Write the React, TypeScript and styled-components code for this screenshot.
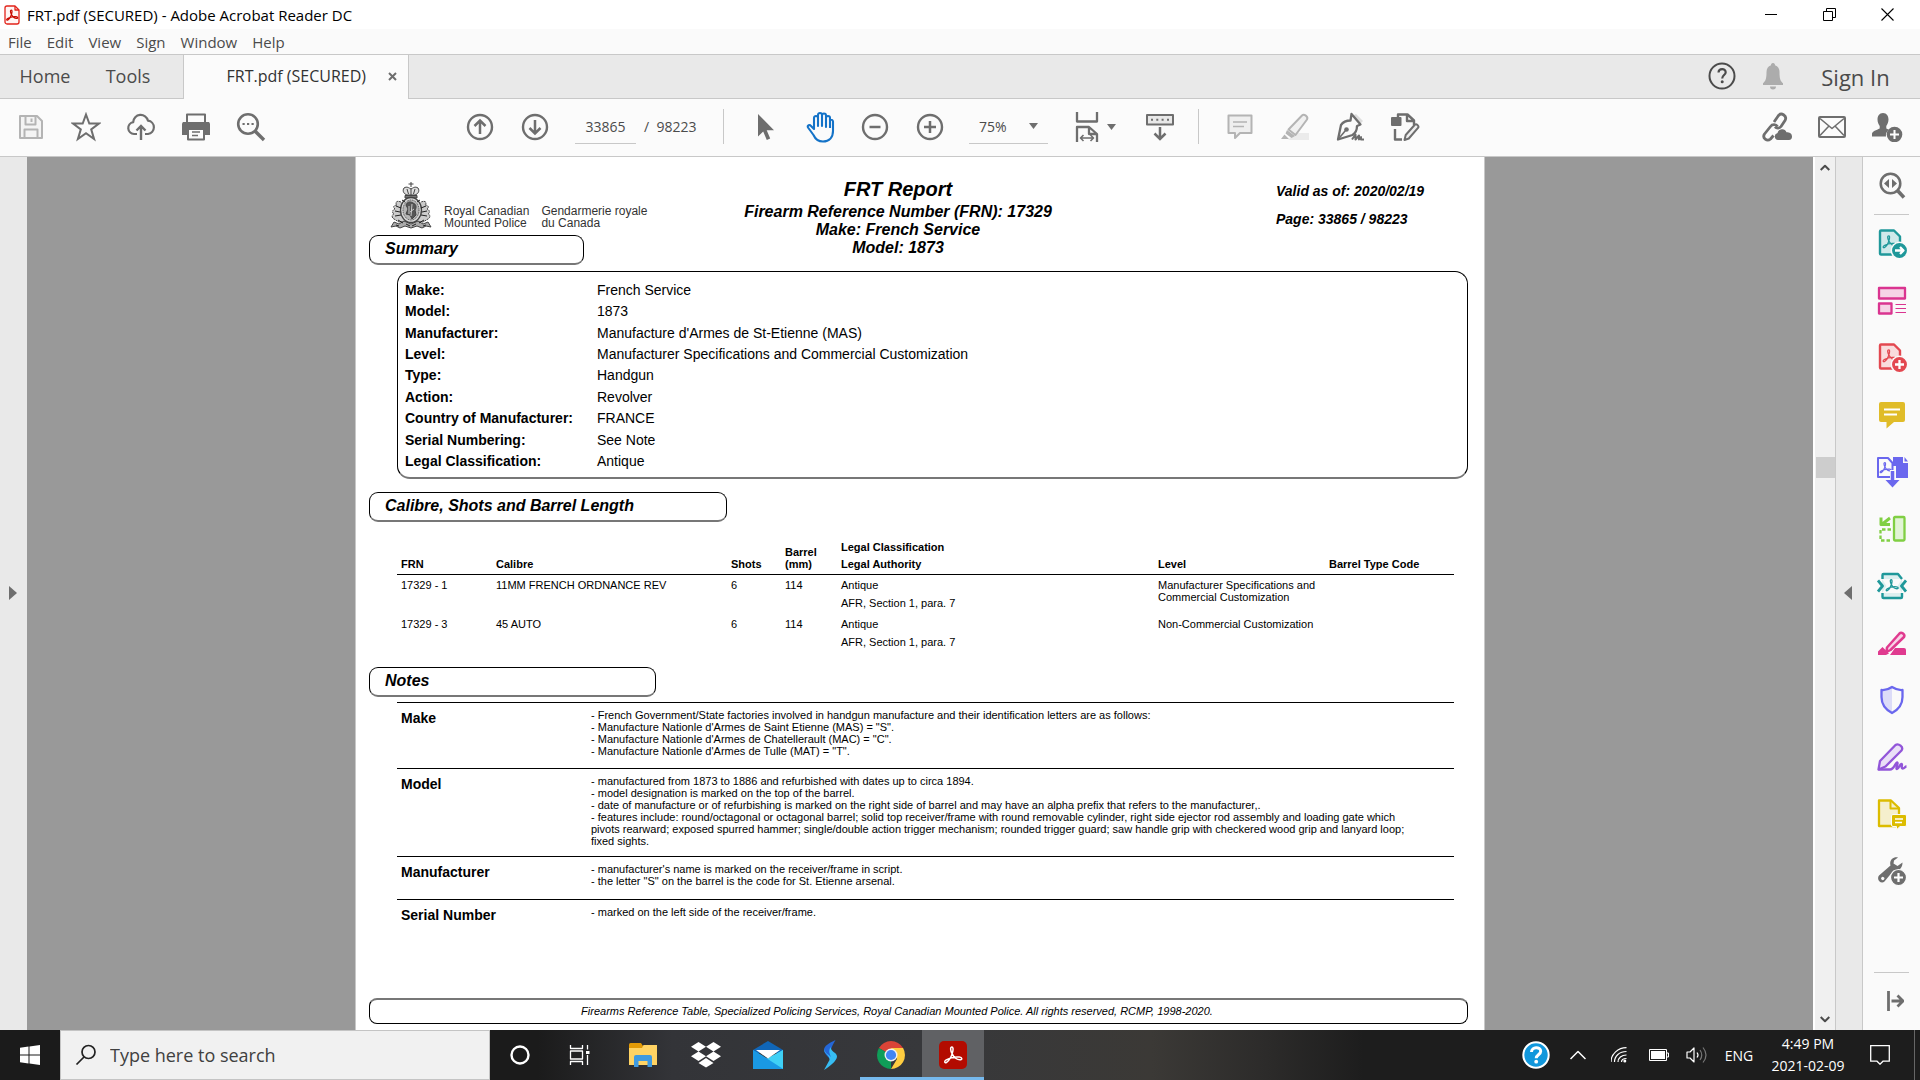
import React from "react";
import styled, { createGlobalStyle } from "styled-components";

const UI_FONT = `"Open Sans", "Noto Sans", sans-serif`;
const DOC_FONT = `"Liberation Sans", Arial, sans-serif`;

const GlobalStyle = createGlobalStyle`
  * { box-sizing: border-box; }
  body { margin: 0; font-family: ${UI_FONT}; color: #4b4b4b; overflow: hidden; }
  button, input, select { font: inherit; color: inherit; background: none; border: 0; padding: 0; margin: 0; }
  svg { display: block; flex: none; }
  h1, h2, p, dl, dd, dt { margin: 0; }
`;

/* ---------- window frame ---------- */

const Window = styled.div`
  display: flex;
  flex-direction: column;
  height: 100vh;
  background: #fafafa;
`;

const TitleBar = styled.header`
  display: flex;
  align-items: center;
  height: 29px;
  padding: 0 4px;
  background: #fff;
  color: #000;
  font-size: 15px;
`;

const WindowTitle = styled.span`
  margin-left: 7px;
  flex: 1;
`;

const WindowButton = styled.button`
  width: 58px;
  height: 28px;
  display: grid;
  place-items: center;
`;

const MenuBar = styled.nav`
  display: flex;
  align-items: center;
  gap: 15px;
  height: 25px;
  padding-left: 8px;
  font-size: 15px;
`;

const TabBar = styled.div`
  display: flex;
  align-items: stretch;
  height: 45px;
  background: #e9e9e9;
  border-top: 1px solid #c8c8c8;
  border-bottom: 1px solid #c8c8c8;
  font-size: 18px;
`;

const TextTab = styled.button<{ $width: number }>`
  width: ${(p) => p.$width}px;
  padding-bottom: 2px;
  text-align: center;
`;

const ActiveTab = styled.div`
  display: flex;
  align-items: center;
  justify-content: flex-end;
  gap: 22px;
  width: 226px;
  margin: 0 auto -1px 17px;
  padding: 0 11px 2px 0;
  background: #fbfbfb;
  border: solid #c8c8c8;
  border-width: 0 1px;
  color: #323232;
  font-size: 16px;
`;

const CloseTab = styled.button`
  color: #6e6e6e;
`;

const TabBarButton = styled.button`
  width: 51px;
  padding-bottom: 2px;
  display: grid;
  place-items: center;
`;

const SignIn = styled.button`
  width: 122px;
  padding-right: 7px;
  font-size: 22px;
`;

/* ---------- toolbar ---------- */

const Toolbar = styled.div`
  display: flex;
  align-items: center;
  height: 58px;
  padding: 0 6px 2px 3px;
  background: #fbfbfb;
  border-bottom: 1px solid #c8c8c8;
  color: #6e6e6e;
  font-size: 14px;
`;

const ToolGroup = styled.div<{ $before?: string }>`
  display: flex;
  align-items: center;
  margin-left: ${(p) => p.$before ?? "0"};
`;

const ToolButton = styled.button<{ $faded?: boolean; $active?: boolean }>`
  width: 55px;
  height: 44px;
  display: grid;
  place-items: center;
  color: ${(p) => (p.$active ? "#1473c8" : p.$faded ? "#b4b4b4" : "#6e6e6e")};
`;

const DropButton = styled(ToolButton)`
  width: 84px;
  padding-left: 10px;
  grid-auto-flow: column;
  justify-content: center;
  gap: 8px;
`;

const PageField = styled.input`
  width: 61px;
  height: 34px;
  margin: 0 8px 0 13px;
  text-align: center;
  color: #4b4b4b;
  border-bottom: 1px solid #c8c8c8;
`;

const PageTotal = styled.span`
  width: 79px;
  color: #4b4b4b;
  white-space: pre;
`;

const Separator = styled.span`
  width: 1px;
  height: 35px;
  margin-right: 13px;
  background: #c8c8c8;
`;

const ZoomBox = styled.label`
  display: flex;
  align-items: center;
  width: 79px;
  height: 34px;
  margin-left: 12px;
  padding: 0 10px;
  border-bottom: 1px solid #c8c8c8;
`;

const ZoomSelect = styled.select`
  appearance: none;
  flex: 1;
  min-width: 0;
  color: #4b4b4b;
`;

/* ---------- viewer ---------- */

const Viewer = styled.main`
  display: flex;
  flex: 1;
  min-height: 0;
`;

const SideHandle = styled.button<{ $side: "left" | "right" }>`
  width: ${(p) => (p.$side === "left" ? 27 : 26)}px;
  display: flex;
  align-items: center;
  padding: 0 0 2px ${(p) => (p.$side === "left" ? 9 : 8)}px;
  background: #e9e9e9;
`;

const Canvas = styled.div`
  flex: 1;
  display: flex;
  justify-content: center;
  min-width: 0;
  background: #999;
`;

const ScrollBar = styled.div`
  display: flex;
  flex-direction: column;
  align-items: center;
  width: 23px;
  background: #f0f0f0;
  border-left: 2px solid #fff;
  border-right: 1px solid #c8c8c8;
`;

const ScrollButton = styled.button`
  width: 20px;
  height: 21px;
  display: grid;
  place-items: center;
`;

const ScrollSpace = styled.span<{ $grow: number }>`
  flex: ${(p) => p.$grow};
`;

const ScrollThumb = styled.span`
  width: 19px;
  height: 21px;
  background: #cdcdcd;
`;

const ToolPanel = styled.aside`
  display: flex;
  flex-direction: column;
  align-items: center;
  width: 58px;
  background: #fafafa;
  border-left: 1px solid #c8c8c8;
`;

const PanelButton = styled.button`
  width: 57px;
  height: 57px;
  display: grid;
  place-items: center;
  color: #6e6e6e;
`;

const PanelRule = styled.span<{ $bottom?: boolean }>`
  width: 35px;
  height: 1px;
  background: #c8c8c8;
  margin-top: ${(p) => (p.$bottom ? "auto" : "0")};
`;

/* ---------- document ---------- */

const Sheet = styled.article`
  display: flex;
  flex-direction: column;
  flex: 0 1 1130px;
  padding: 0 16px 6px 13px;
  background: #fff;
  border: solid #c8c8c8;
  border-width: 0 1px;
  color: #000;
  font-family: ${DOC_FONT};
  font-size: 14px;
`;

const ReportHead = styled.div`
  display: grid;
  grid-template-columns: 339px 380px 1fr;
  padding-top: 20px;
  font-weight: bold;
  font-style: italic;
`;

const Brand = styled.div`
  display: flex;
  align-items: flex-end;
  gap: 12px;
  height: 52px;
  margin-bottom: 6px;
  padding-left: 21px;
  font-size: 12px;
  font-weight: normal;
  font-style: normal;
  line-height: 12px;
  color: #333;
`;

const Titles = styled.div`
  text-align: center;
  font-size: 16px;
  line-height: 18px;
`;

const ReportTitle = styled.h1`
  font-size: 20px;
  line-height: 24px;
  margin-bottom: 2px;
`;

const Validity = styled.div`
  padding-left: 188px;
  line-height: 28px;
  font-size: 14px;
`;

const SectionTitle = styled.h2<{ $width: number }>`
  width: ${(p) => p.$width}px;
  height: 30px;
  padding-left: 15px;
  border: 1px solid #000;
  border-bottom: 2px solid #777;
  border-radius: 9px;
  font-size: 16px;
  line-height: 26px;
  font-weight: bold;
  font-style: italic;
`;

const SummaryBox = styled.dl`
  display: grid;
  grid-template-columns: 192px 1fr;
  grid-template-rows: repeat(9, 1fr);
  align-items: center;
  height: 208px;
  margin: 6px 0 13px 28px;
  padding: 7px 7px 5px;
  border: 1px solid #000;
  border-bottom: 2px solid #777;
  border-radius: 13px;
`;

const Term = styled.dt`
  font-weight: bold;
`;

const Calibres = styled.table`
  table-layout: fixed;
  width: calc(100% - 42px);
  margin: 19px 0 14px 28px;
  border-collapse: separate;
  border-spacing: 0;
  font-size: 11px;
  line-height: 12px;
`;

const HeadCell = styled.th`
  padding: 0 0 4px 4px;
  text-align: left;
  vertical-align: bottom;
  border-bottom: 1px solid #000;
`;

const Cell = styled.td`
  padding: 4px 0 5px 4px;
  vertical-align: top;
`;

const Stacked = styled.div<{ $gap: number }>`
  display: grid;
  gap: ${(p) => p.$gap}px;
`;

const Notes = styled.dl`
  display: grid;
  grid-template-rows: 66px 88px 43px auto;
  margin: 5px 14px 0 28px;
`;

const Note = styled.div`
  display: grid;
  grid-template-columns: 190px 1fr;
  padding: 6px 0 0 4px;
  border-top: 1px solid #000;
`;

const NoteTerm = styled(Term)`
  line-height: 18px;
`;

const NoteText = styled.dd`
  font-size: 11px;
  line-height: 12px;
`;

const Copyright = styled.footer`
  margin-top: auto;
  height: 26px;
  padding-right: 43px;
  border: 1px solid #000;
  border-top: 2px solid #777;
  border-radius: 8px;
  text-align: center;
  font-size: 11px;
  line-height: 23px;
  font-style: italic;
`;

/* ---------- taskbar ---------- */

const Taskbar = styled.footer`
  display: flex;
  align-items: stretch;
  height: 50px;
  color: #fff;
  background: linear-gradient(90deg, #1b1b1b 0, #1b1b1b 28%, #333438 35%, #37383b 48%, #3b3936 60%, #2c2b2a 66%, #1d1d1d 71%);
`;

const TaskButton = styled.button<{ $width?: number; $running?: boolean; $current?: boolean }>`
  width: ${(p) => p.$width ?? 62}px;
  display: grid;
  place-items: center;
  padding-bottom: 1px;
  background: ${(p) => (p.$current ? "#606164" : "none")};
  ${(p) => p.$running && `box-shadow: inset 0 -3px #76b9ed;`}
`;

const SearchBox = styled.label`
  display: flex;
  align-items: center;
  gap: 13px;
  width: 430px;
  padding-left: 14px;
  background: #f1f1f1;
  border: 1px solid #c4c4c4;
  color: #222;
  font-size: 18px;
`;

const SearchInput = styled.input`
  flex: 1;
  min-width: 0;
  outline: 0;
  &::placeholder { color: #404040; opacity: 1; }
`;

const Tray = styled.div`
  display: flex;
  align-items: center;
  margin-left: auto;
  font-size: 14px;
`;

const TrayButton = styled.button<{ $width: number }>`
  width: ${(p) => p.$width}px;
  height: 50px;
  display: grid;
  place-items: center;
`;

const Clock = styled.button`
  width: 92px;
  height: 50px;
  line-height: 22px;
  text-align: center;
`;

const DesktopEdge = styled.span`
  width: 1px;
  height: 50px;
  margin-right: 5px;
  background: #666;
`;

/* ---------- icons ---------- */

type IconProps = { w?: number; h?: number; box?: string; sw?: number; children: React.ReactNode };
const Icon = ({ w = 30, h = 30, box, sw = 2, children }: IconProps) => (
  <svg width={w} height={h} viewBox={box ?? `0 0 ${w} ${h}`} fill="none" stroke="currentColor" strokeWidth={sw} strokeLinejoin="round" aria-hidden="true">
    {children}
  </svg>
);

const solid = { fill: "currentColor", stroke: "none" };

/* the three-armed Acrobat ribbon, drawn in a square of the given size */
const Ribbon = ({ x, y, size, color, sw }: { x: number; y: number; size: number; color: string; sw: number }) => (
  <path
    d="M13 6.500c-1.800 0-1.500 3 .2 6.300 1.600 3 4.500 5.700 7.300 5.700 2.500 0 2.400-2.300-.6-2.600-4-.4-9 .7-12.300 2.600-2.400 1.500-1.400 3.500.4 2.300 2.300-1.600 4.900-6.300 5.800-10.300.5-2.300.3-4-.8-4Z"
    transform={`translate(${x} ${y}) scale(${size / 16}) translate(-6 -5.500)`}
    stroke={color}
    strokeWidth={(sw * 16) / size}
    fill="none"
  />
);

const AppIcon = () => (
  <Icon w={16} h={20} sw={1.300}>
    <path d="M1 3a2 2 0 0 1 2-2h8l4 4v12a2 2 0 0 1-2 2H3a2 2 0 0 1-2-2Z" stroke="#e2231a" fill="#fff5f4" />
    <path d="M11 1v4h4" stroke="#e2231a" />
    <Ribbon x={2.500} y={4.500} size={11} color="#c80a00" sw={1.200} />
  </Icon>
);
const Save = () => (
  <Icon w={26} h={26}>
    <path d="M2 2h17l5 5v17H2Z" fill="#f4f4f4" />
    <path d="M7.500 2v8.500h10V2M13.500 4.500v3.500M6.500 24v-8.500h13V24" />
  </Icon>
);
const Star = () => (
  <Icon><path d="m15 2.500 3.300 9h9.600l-7.700 5.900 2.900 9.700-8.100-5.800-8.100 5.800 2.900-9.700L2.100 11.500h9.600Z" strokeLinejoin="miter" /></Icon>
);
const Cloud = () => (
  <Icon>
    <path d="M11 22H8a6 6 0 0 1-.8-11.900A7.500 7.500 0 0 1 22 8.700 6.700 6.700 0 0 1 22 22h-3" strokeWidth="2.200" />
    <path d="M15 28V14M10.500 18.500 15 14l4.500 4.500" strokeWidth="2.400" strokeLinejoin="miter" />
  </Icon>
);
const Printer = () => (
  <Icon w={28} h={28} box="1 1 28 28">
    <path {...solid} d="M1 12a2 2 0 0 1 2-2h24a2 2 0 0 1 2 2v11h-5v-5H6v5H1Z" />
    <path d="M6 10V2.500h18V10M7 17h16v10.500H7Z" fill="#fbfbfb" />
    <path {...solid} d="M2 10h26v6H2Z" />
    <path d="M11 20h8M11 23.500h6" strokeWidth="1.500" />
  </Icon>
);
const Find = () => (
  <Icon sw={2.600}>
    <circle cx="12" cy="12" r="9.800" />
    <path d="m19 19 9 9" strokeWidth="3.400" />
    <path d="M6.500 12h2.200M11 12h2.200M15.500 12h2.200" strokeWidth="2.200" />
  </Icon>
);
const Circle = ({ d }: { d: string }) => (
  <Icon w={28} h={28} sw={2.400}><circle cx="14" cy="14" r="12" /><path d={d} strokeWidth="2.500" strokeLinejoin="miter" /></Icon>
);
const Pointer = () => <Icon w={18} h={28}><path {...solid} d="M2 1v22.500l5.200-5 3.600 8.500 3.400-1.500-3.500-8.300H18Z" /></Icon>;
const Hand = () => (
  <Icon w={30} h={32} sw={2.100}>
    <path d="M9 18V7a2 2 0 0 1 4 0v8V4a2 2 0 0 1 4 0v11V4.500a2 2 0 0 1 4 0V16 7a2 2 0 0 1 4 0v2a2 2 0 0 1 3 1.500V20c0 6-3.500 10.500-10 10.500-5 0-7.500-2-9.500-6.500L3 16.500c-1-2.200 1.700-3.300 3-1.500Z" />
    <path d="M25 8v9" />
  </Icon>
);
const Caret = () => <Icon w={9} h={6}><path {...solid} d="M0 0h9L4.500 6Z" /></Icon>;
const FitPage = () => (
  <Icon w={24} h={32} sw={2.300}>
    <path d="M2 1v9.500h20V1" />
    <path d="M2 31V16h12l8 7v8M14 16v7h8" />
    <path d="M5.500 27h13M8.500 24l-3 3 3 3M15.500 24l3 3-3 3" strokeWidth="1.600" />
  </Icon>
);
const Keyboard = () => (
  <Icon w={30} h={30}>
    <rect x="2" y="3" width="26" height="9.500" fill="#e8e8e8" />
    <path d="M6 7.700h2M11.300 7.700h2M16.600 7.700h2M22 7.700h2" />
    <path d="M15 15v12M9.500 21.500l5.500 5.500 5.500-5.500" strokeWidth="2.500" strokeLinejoin="miter" />
  </Icon>
);
const Comment = () => (
  <Icon w={28} h={28}>
    <path d="M2.500 2.500h23V20H14l-5 5v-5H2.500Z" fill="#efefef" />
    <path d="M7 9h14M7 13.500h11" strokeWidth="1.600" />
  </Icon>
);
const Marker = () => (
  <Icon>
    <path {...solid} fill="#ebebeb" d="M15 21h14v7H8Z" />
    <path d="M8.500 17.500 22 3.500c2-2 6.500 1 5 4L15.500 23Z" fill="#f1f1f1" />
    <path {...solid} d="m7 18 8 6-3.500 2-6-4.500ZM1 27l3.500-4.500L9 27Z" />
  </Icon>
);
const Pen = () => (
  <Icon>
    <path {...solid} fill="#dedede" d="m17 4 4-2 7 7-3 3Z" />
    <path d="m16.500 2 9 10.500-3.500 1.500c0 4-1.500 7-4.500 9L3 27.500l3-14.500c2-3 5.500-4.500 9.500-4.500Z" strokeWidth="2.300" />
    <path d="m3 27.500 7.500-9" strokeWidth="1.600" />
    <circle {...solid} cx="11.500" cy="17.500" r="2.300" />
    <path d="m17 27.500 3.500-5v5l3.500-4v4l2-2.500v2.500h3" />
  </Icon>
);
const EditDoc = () => (
  <Icon>
    <path d="M8 5V2.500h9.500l6.500 6V13M17 3v6h7M5 17v10.500h7" strokeWidth="2.400" />
    <rect {...solid} x="1" y="5" width="10.500" height="9" rx="1" />
    <path d="m14.500 28 1.200-5L25 12.500c1.500-1 4.500 1.500 3 3.300L18.800 26.500Z" fill="#eee" />
  </Icon>
);
const LinkCloud = () => (
  <Icon w={32}>
    <path d="m13 10 4.500-6.500c3-3.500 9 .5 6.500 5l-4 6c-1.500 2-4.500 2-6 .3M16.500 14.500c-1.500-2.300-5.200-2.500-7 0l-6 7.500c-2.500 4 2.500 8 6 5l3-3.500" strokeWidth="2.800" />
    <path {...solid} d="M17 28a3.500 3.500 0 0 1-.5-6.900 4.700 4.700 0 0 1 9-.9c3 0 5.500 1.300 5.500 4.200A3.500 3.500 0 0 1 28 28Z" />
  </Icon>
);
const Envelope = () => (
  <Icon w={30} h={24}>
    <rect x="2" y="2" width="26" height="20" rx="1" />
    <path d="m3 3.500 12 10 12-10M3 20.500l8.500-9M27 20.500l-8.500-9" strokeWidth="1.600" />
  </Icon>
);
const AddUser = () => (
  <Icon w={32}>
    <path {...solid} d="M12 1c3.800 0 5.500 3 5.500 6.500 0 3-1.200 5-2.200 6.500v2.500l2.700 1.300c-3 2.300-3.200 4-3 6.700H1v-2.700c0-2.500 4.500-3.700 7.700-5.300V14c-1-1.500-2.200-3.500-2.200-6.500C6.500 4 8.200 1 12 1Z" />
    <circle {...solid} cx="23.500" cy="22.500" r="7.800" />
    <path d="M23.500 18v9M19 22.500h9" stroke="#fff" />
  </Icon>
);
const Bell = () => (
  <Icon w={22} h={28}><path fill="#acacac" stroke="none" d="M11 1c1.500 0 2 1 2 2.200 3 1 4.500 3.500 4.500 7 0 7 1 8.800 3.500 11V23H1v-1.800c2.500-2.200 3.500-4 3.500-11 0-3.500 1.500-6 4.500-7C9 2 9.500 1 11 1ZM8 24.500h6a3 3 0 0 1-6 0Z" /></Icon>
);
const HelpIcon = () => (
  <Icon w={28} h={28} sw={2}>
    <circle cx="14" cy="14" r="12.500" />
    <path d="M10.500 10.500c.2-4.500 7.200-4.500 7.200-.3 0 2.800-3.500 3-3.500 6.300" strokeWidth="2.200" />
    <circle {...solid} cx="14.200" cy="19.800" r="1.500" />
  </Icon>
);

/* right-hand tool icons */
const PdfBadge = ({ color, tint, mark }: { color: string; tint: string; mark: string }) => (
  <Icon w={32} h={32}>
    <path d="M5 2.500h13l6 6V26.500H5a1 1 0 0 1-1-1v-22a1 1 0 0 1 1-1Z" stroke={color} fill={tint} strokeWidth="2.400" />
    <Ribbon x={7} y={7} size={13} color={color} sw={1.300} />
    <circle cx="23.500" cy="22.500" r="8.200" fill={color} stroke="#fafafa" strokeWidth="1.500" />
    <path d={mark} stroke="#fff" strokeWidth="2.300" />
  </Icon>
);
const SearchTool = () => (
  <Icon w={28} h={28} sw={2.500}>
    <circle cx="12.500" cy="11.500" r="9.800" /><path d="m19 18 7 7.500" strokeWidth="3.600" />
    <path {...solid} d="M6 11.500 11 7v9ZM19 11.500 14 7v9Z" />
  </Icon>
);
const Organize = () => (
  <Icon w={30} h={30}>
    <path d="M2 2h26v10.500H2ZM2 17.500h12.500v10H2Z" stroke="#da3490" fill="#f6d3e6" strokeWidth="2.300" />
    <path d="M18.500 18.500H29M18.500 22.500H29M18.500 26.500H29" stroke="#da3490" strokeWidth="1.200" />
  </Icon>
);
const CommentTool = () => (
  <Icon w={28} h={28}>
    <path d="M3 1h22a2 2 0 0 1 2 2v16a2 2 0 0 1-2 2h-9l-7.500 6.500V21H3a2 2 0 0 1-2-2V3a2 2 0 0 1 2-2Z" fill="#e0bc28" stroke="none" />
    <path d="M6 8.500h16M6 13.500h13" stroke="#fff" />
  </Icon>
);
const Combine = () => (
  <Icon w={32} h={32}>
    <path d="M17 1h10v6h5v15H20V10h-3Z" fill="#6a67ee" stroke="none" />
    <path d="M28.500 1v4.500H32Z" fill="#6a67ee" stroke="none" />
    <path d="M2 2h10l4.500 5v14H2Z" stroke="#6a67ee" fill="#fafafa" />
    <Ribbon x={4} y={6} size={11} color="#6a67ee" sw={1.200} />
    <path d="M16.500 14v13M10 24.500h13l-6.500 7Z" stroke="#fafafa" strokeWidth="5" />
    <path d="M16.500 15v10" stroke="#6a67ee" strokeWidth="3.500" />
    <path d="M9.500 24h14l-7 7.500Z" fill="#6a67ee" stroke="none" />
  </Icon>
);
const Compare = () => (
  <Icon w={30} h={30}>
    <rect x="17" y="3" width="10.500" height="23.500" rx="1" stroke="#80cf43" fill="#e2f4d6" strokeWidth="2.300" />
    <path d="M13 4 6 9.500M4 3.500v7h9" stroke="#80cf43" strokeWidth="3" />
    <path d="M14 15.500H3.500v11H14" stroke="#80cf43" strokeWidth="2.300" strokeDasharray="3.500 2" />
  </Icon>
);
const Compress = () => (
  <Icon w={30} h={30}>
    <path d="M5 8V4q0-1 1-1h15l4 5M5 22v4q0 1 1 1h18q1 0 1-1v-4M5 8l4.500 7L5 22M25 8l-4.500 7 4.500 7" stroke="none" fill="#dcefef" />
    <path d="M5.500 8V4q0-1 1-1H21l4 5M5.500 22v4q0 1 1 1h17.500q1 0 1-1v-4" stroke="#1f989a" strokeWidth="2.400" />
    <path d="m1 9.500 4.500 5.500L1 20.500M29 9.500 24.500 15l4.500 5.500" stroke="#1f989a" strokeWidth="2.800" />
    <Ribbon x={9} y={8} size={12} color="#1f989a" sw={1.300} />
  </Icon>
);
const Redact = () => (
  <Icon w={30} h={28}>
    <path d="m10 18.500 12.500-14c2-2 6 1 4.500 3.500L13.500 21l-4 2Z" stroke="#e03a8f" fill="#f8d3e6" strokeWidth="2.500" />
    <path d="M5.500 18 12 24.500 9 26H1v-3.500ZM18 19h9q2 0 2 2v5H13Z" fill="#e03a8f" stroke="none" />
  </Icon>
);
const Protect = () => (
  <Icon w={26} h={30}>
    <path d="M13 2v26C5.500 24 2.500 19 2.500 12V5Q8 5.500 13 2Z" fill="#dcdcf8" stroke="none" />
    <path d="M13 2Q18.500 5.500 23.500 5v7c0 7-3 12-10.500 16C5.500 24 2.500 19 2.500 12V5Q8 5.500 13 2Z" stroke="#6a67ee" strokeWidth="2.300" />
  </Icon>
);
const Sign = () => (
  <Icon w={32} h={30}>
    <path d="M2.500 27.500 4 19 19.500 3c3-2 8.500 2 6 5.500L9.500 24.500Z" fill="#eadff7" stroke="#9256d9" strokeWidth="2.300" />
    <path d="M2.500 27.500H14c4 0 5-6 7-7 2 0-2 6.500 0 6.500s2.500-5 4.500-5c1.500 0-1 4.500 1 4.500 2.500 0 2-2 4-2" stroke="#9256d9" strokeWidth="2.300" />
  </Icon>
);
const SendComments = () => (
  <Icon w={30} h={32}>
    <path d="M2 2.500h12l8 7.500V28H2Z" stroke="#dcbc00" fill="#f5efcd" strokeWidth="2.300" />
    <path d="M13.500 3v7.500H22" stroke="#dcbc00" />
    <path d="M16 16.500h12q1.500 0 1.500 1.500v9q0 1.500-1.500 1.500h-5l-3.500 3.300v-3.300H16q-1.500 0-1.500-1.500v-9q0-1.500 1.500-1.500Z" fill="#dcbc00" stroke="#fafafa" strokeWidth="1" />
    <path d="M18 21h8M18 24.500h7" stroke="#fff" strokeWidth="1.600" />
  </Icon>
);
const MoreTools = () => (
  <Icon w={30} h={30}>
    <path {...solid} fillRule="evenodd" d="M21 1.500c-5-1-9 3-7.500 8L2 19.500c-3 4 2 9 5.500 6L17 14c5 1.500 8.500-2 8.500-7.500l-5 3.500-4-2.500.5-3ZM4.500 21.500a1.500 1.500 0 1 0 2.500 2 1.500 1.500 0 1 0-2.500-2Z" />
    <circle cx="21.500" cy="21.500" r="8" fill="#6e6e6e" stroke="#fafafa" strokeWidth="1.200" />
    <path d="M21.500 17v9M17 21.500h9" stroke="#fff" strokeWidth="2.200" />
  </Icon>
);
const CollapsePanel = () => (
  <Icon w={24} h={22} box="-6 1 24 22" sw={2.800}><path d="M2.500 1v20M5.500 11h10M11.500 5.500 17 11l-5.500 5.500" strokeLinejoin="miter" /></Icon>
);

/* the crest of the police force */
const Crest = () => (
  <Icon w={42} h={47} sw={1}>
    <g stroke="#444">
      <path d="M21 0v5M18.500 2h5M14 6c-2 3 0 6 3 7h8c3-1 5-4 3-7-3-2-5 0-7 1-2-1-4-3-7-1ZM21 6v7M17 7l1.500 5M25 7l-1.500 5" fill="#ddd" />
      <path d="M15 13.500h12v2.500H15Z" fill="#777" />
      <path d="M11 20c-5-2-6 1-4 3-4 0-4 3-2 4-3 1-3 4-1 5-3 1-2 4 0 5l5 3h24l5-3c2-1 3-4 0-5 2-1 2-4-1-5 2-1 2-4-2-4 2-2 1-5-4-3" fill="#ccc" strokeDasharray="2 .7" />
      <ellipse cx="21" cy="28" rx="10.500" ry="12.500" fill="#d7d7d7" strokeWidth="1.300" />
      <ellipse cx="21" cy="28" rx="8" ry="10" fill="#b5b5b5" strokeDasharray="1 .8" />
      <path d="M16 23c1-3 4-4 7-2 3 1 4 4 2 7l1 5-4 4-2-4-4-1 2-5Z" fill="#555" />
      <path d="M19 24v8M22 22l-1 12M24 27l-4 3" stroke="#ccc" />
      <path d="m1 45 3-5 5 2 5-3 7 3 7-3 5 3 5-2 3 5-5-1-4 2-5-2-6 2-6-2-5 2-4-2Z" fill="#aaa" />
      <path d="M6 24l5 2M5 29l5 1M5 34l6-1M36 24l-5 2M37 29l-5 1M37 34l-6-1M8 38l5 3M34 38l-5 3M12 18l3 2M30 18l-3 2M6 43l3 1M16 42l4 2M26 42l-4 2M36 43l-3 1" stroke="#222" />
    </g>
  </Icon>
);

/* ---------- data ---------- */

const MENUS = ["File", "Edit", "View", "Sign", "Window", "Help"];

const SUMMARY = [
  ["Make:", "French Service"],
  ["Model:", "1873"],
  ["Manufacturer:", "Manufacture d'Armes de St-Etienne (MAS)"],
  ["Level:", "Manufacturer Specifications and Commercial Customization"],
  ["Type:", "Handgun"],
  ["Action:", "Revolver"],
  ["Country of Manufacturer:", "FRANCE"],
  ["Serial Numbering:", "See Note"],
  ["Legal Classification:", "Antique"],
];

const CALIBRES = [
  { frn: "17329 - 1", calibre: "11MM FRENCH ORDNANCE REV", level: "Manufacturer Specifications and Commercial Customization" },
  { frn: "17329 - 3", calibre: "45 AUTO", level: "Non-Commercial Customization" },
];

const NOTES = [
  { term: "Make", lines: [
    "- French Government/State factories involved in handgun manufacture and their identification letters are as follows:",
    '- Manufacture Nationle d\'Armes de Saint Etienne (MAS) = "S".',
    '- Manufacture Nationle d\'Armes de Chatellerault (MAC) = "C".',
    '- Manufacture Nationle d\'Armes de Tulle (MAT) = "T".',
  ] },
  { term: "Model", lines: [
    "- manufactured from 1873 to 1886 and refurbished with dates up to circa 1894.",
    "- model designation is marked on the top of the barrel.",
    "- date of manufacture or of refurbishing is marked on the right side of barrel and may have an alpha prefix that refers to the manufacturer,.",
    "- features include: round/octagonal or octagonal barrel; solid top receiver/frame with round removable cylinder, right side ejector rod assembly and loading gate which",
    "pivots rearward; exposed spurred hammer; single/double action trigger mechanism; rounded trigger guard; saw handle grip with checkered wood grip and lanyard loop;",
    "fixed sights.",
  ] },
  { term: "Manufacturer", lines: [
    "- manufacturer's name is marked on the receiver/frame in script.",
    '- the letter "S" on the barrel is the code for St. Etienne arsenal.',
  ] },
  { term: "Serial Number", lines: ["- marked on the left side of the receiver/frame."] },
];

const PANEL_TOOLS: [string, React.ReactNode][] = [
  ["Export PDF", <PdfBadge color="#1f989a" tint="#cfe9ea" mark="M19 22.500h8M24 19l3.500 3.500L24 26" />],
  ["Organize Pages", <Organize />],
  ["Create PDF", <PdfBadge color="#e34850" tint="#f9dcdd" mark="M23.500 18v9M19 22.500h9" />],
  ["Comment", <CommentTool />],
  ["Combine Files", <Combine />],
  ["Compare Files", <Compare />],
  ["Compress PDF", <Compress />],
  ["Redact", <Redact />],
  ["Protect", <Protect />],
  ["Fill & Sign", <Sign />],
  ["Send for Comments", <SendComments />],
  ["More Tools", <MoreTools />],
];

/* ---------- sections ---------- */

const ReportPage = () => (
  <Sheet>
    <ReportHead>
      <div>
        <Brand>
          <Crest />
          <p>Royal Canadian<br />Mounted Police</p>
          <p>Gendarmerie royale<br />du Canada</p>
        </Brand>
        <SectionTitle $width={215}>Summary</SectionTitle>
      </div>
      <Titles>
        <ReportTitle>FRT Report</ReportTitle>
        <p>Firearm Reference Number (FRN): 17329</p>
        <p>Make: French Service</p>
        <p>Model: 1873</p>
      </Titles>
      <Validity>
        <p>Valid as of: 2020/02/19</p>
        <p>Page: 33865 / 98223</p>
      </Validity>
    </ReportHead>

    <SummaryBox>
      {SUMMARY.map(([term, value]) => (
        <React.Fragment key={term}>
          <Term>{term}</Term>
          <dd>{value}</dd>
        </React.Fragment>
      ))}
    </SummaryBox>

    <SectionTitle $width={358}>Calibre, Shots and Barrel Length</SectionTitle>
    <Calibres>
      <colgroup>
        {[95, 235, 54, 56, 317, 171, 129].map((width) => <col key={width} width={width} />)}
      </colgroup>
      <thead>
        <tr>
          <HeadCell>FRN</HeadCell>
          <HeadCell>Calibre</HeadCell>
          <HeadCell>Shots</HeadCell>
          <HeadCell>Barrel (mm)</HeadCell>
          <HeadCell><Stacked $gap={5}><span>Legal Classification</span><span>Legal Authority</span></Stacked></HeadCell>
          <HeadCell>Level</HeadCell>
          <HeadCell>Barrel Type Code</HeadCell>
        </tr>
      </thead>
      <tbody>
        {CALIBRES.map((row) => (
          <tr key={row.frn}>
            <Cell>{row.frn}</Cell>
            <Cell>{row.calibre}</Cell>
            <Cell>6</Cell>
            <Cell>114</Cell>
            <Cell><Stacked $gap={6}><span>Antique</span><span>AFR, Section 1, para. 7</span></Stacked></Cell>
            <Cell>{row.level}</Cell>
            <Cell />
          </tr>
        ))}
      </tbody>
    </Calibres>

    <SectionTitle $width={287}>Notes</SectionTitle>
    <Notes>
      {NOTES.map((note) => (
        <Note key={note.term}>
          <NoteTerm>{note.term}</NoteTerm>
          <NoteText>{note.lines.map((line) => <p key={line}>{line}</p>)}</NoteText>
        </Note>
      ))}
    </Notes>

    <Copyright>Firearms Reference Table, Specialized Policing Services, Royal Canadian Mounted Police. All rights reserved, RCMP, 1998-2020.</Copyright>
  </Sheet>
);

const TaskbarRow = () => (
  <Taskbar>
    <TaskButton $width={60} aria-label="Start">
      <Icon w={20} h={20}><path {...solid} d="M0 2.800 8.500 1.600v8H0ZM9.500 1.500 20 0v9.600H9.500ZM0 10.500h8.500v8L0 17.300ZM9.500 10.500H20V20L9.500 18.600Z" /></Icon>
    </TaskButton>
    <SearchBox>
      <Icon w={22} h={22} sw={1.700}><circle cx="13.500" cy="8" r="6.500" /><path d="M9 13 1.500 20.500" /></Icon>
      <SearchInput type="text" placeholder="Type here to search" aria-label="Type here to search" />
    </SearchBox>
    <TaskButton $width={60} aria-label="Cortana">
      <Icon w={20} h={20} sw={2.400}><circle cx="10" cy="10" r="8.500" /></Icon>
    </TaskButton>
    <TaskButton $width={60} aria-label="Task View">
      <Icon w={22} h={20} sw={1.300}>
        <path d="M1.500 0v3.500h12V0M1.500 20v-3.500h12V20M1.500 6h12v8h-12ZM18.500 0v4.500M18.500 10v10" />
        <path {...solid} d="M17 6h3.500v3H17Z" />
      </Icon>
    </TaskButton>
    <TaskButton $width={66} aria-label="File Explorer">
      <Icon w={28} h={24}>
        <path stroke="none" fill="#e29a06" d="M0 1.500Q0 0 1.500 0H12l2 3v4H0Z" />
        <path stroke="none" fill="#ffd363" d="M0 5h13l1.500-3H28v20H0Z" />
        <path stroke="none" fill="#3f9ae0" d="M5 24V14q0-2 2-2h14q2 0 2 2v10h-4.500v-6h-9v6Z" />
      </Icon>
    </TaskButton>
    <TaskButton $width={60} aria-label="Dropbox">
      <Icon w={30} h={26}>
        <path {...solid} d="m7.500 0 7.500 4.700-7.500 4.800L0 4.700ZM22.500 0 30 4.700l-7.500 4.800L15 4.700ZM7.500 9.500l7.500 4.800L7.500 19 0 14.300ZM22.500 9.500l7.500 4.800-7.500 4.700-7.500-4.700ZM15 16l7.500 4.900L15 25.600l-7.500-4.700Z" />
      </Icon>
    </TaskButton>
    <TaskButton $width={64} aria-label="Mail">
      <Icon w={30} h={28}>
        <path stroke="none" fill="#1066b8" d="M0 9 15 0l15 9v3H0Z" />
        <path stroke="none" fill="#24a8ea" d="M0 9v19h30V9L15 18Z" />
        <path stroke="none" fill="#3fd0f5" d="M30 9v19L14 17.500Z" />
        <path stroke="none" fill="#fff" d="M3 9h24l-12 8.500Z" />
        <path stroke="none" fill="#1490df" d="M0 28V9l30 19Z" opacity=".6" />
      </Icon>
    </TaskButton>
    <TaskButton $width={60} aria-label="Stream">
      <Icon w={16} h={30}>
        <path stroke="none" fill="#2467d8" d="M13.500 0C7 3 2 6 2 10c0 3 3 6 6 9l2.500-4c-3-4-2-6 3-15Z" />
        <path stroke="none" fill="#36bdf3" d="M2 9c0 5 6 6 5.500 11L2 30c5-3 13-9 13-13.500C15 12.500 9 12 8.500 7 6 12 8 14 9 17 6 14 3 13 2 9Z" />
      </Icon>
    </TaskButton>
    <TaskButton $running aria-label="Chrome">
      <Icon w={28} h={28}>
        <g stroke="none">
          <path fill="#db4437" d="M14 14 1.900 7A14 14 0 0 1 26.100 7Z" />
          <path fill="#0f9d58" d="M14 14v14A14 14 0 0 1 1.900 7L14 14Z" />
          <path fill="#ffcd40" d="M14 7h12.100A14 14 0 0 1 14 28l6-10Z" />
          <circle cx="14" cy="14" r="6.500" fill="#f1f1f1" /><circle cx="14" cy="14" r="5.100" fill="#4285f4" />
        </g>
      </Icon>
    </TaskButton>
    <TaskButton $running $current aria-label="Adobe Acrobat Reader DC">
      <Icon w={28} h={28}>
        <rect width="28" height="28" rx="5" fill="#b30b00" stroke="none" />
        <Ribbon x={5.500} y={5} size={17} color="#fff" sw={1.500} />
      </Icon>
    </TaskButton>
    <Tray>
      <TrayButton $width={42} aria-label="Get Help">
        <Icon w={28} h={28}>
          <circle cx="14" cy="14" r="12.700" fill="#1197dc" stroke="#fff" />
          <path d="M9.500 11c0-5.500 9.200-5.500 9.200-.8 0 3.500-4.500 3.500-4.500 7" stroke="#fff" strokeWidth="3" />
          <circle cx="14.200" cy="20.700" r="1.900" fill="#fff" stroke="none" />
        </Icon>
      </TrayButton>
      <TrayButton $width={42} aria-label="Show hidden icons">
        <Icon w={16} h={10} sw={1.500}><path d="m.5 9 7.500-7.500L15.500 9" /></Icon>
      </TrayButton>
      <TrayButton $width={40} aria-label="Network">
        <Icon w={16} h={16} sw={1.200}>
          <path d="M0 15C0 7 7 .7 15.500.7M3.500 15c0-6 5-10.500 12-10.500M7 15c0-4 3.500-7 8.500-7M10.500 15c0-2 2-3.500 5-3.500" />
          <circle {...solid} cx="13.800" cy="14" r="1.500" />
        </Icon>
      </TrayButton>
      <TrayButton $width={39} aria-label="Battery">
        <Icon w={20} h={12} sw={1}><path d="M.5.500h17v11H.5ZM18 4h1.500v4H18" /><path {...solid} d="M2 2h14v8H2Z" /></Icon>
      </TrayButton>
      <TrayButton $width={38} aria-label="Volume">
        <Icon w={22} h={18} sw={1.200}>
          <path d="M1 6h3l4-4v14l-4-4H1Z" /><path d="M11 6.500q2 2.500 0 5" />
          <path d="M14 4q3.500 5 0 10M17 1.500q6 7.500 0 15" stroke="#777" />
        </Icon>
      </TrayButton>
      <TrayButton $width={46}>ENG</TrayButton>
      <Clock>4:49 PM<br />2021-02-09</Clock>
      <TrayButton $width={51} aria-label="Notifications">
        <Icon w={20} h={20} sw={1.300}><path d="M.7.700h18.600v15.500H13l-3 3-3-3H.7Z" strokeLinejoin="miter" /></Icon>
      </TrayButton>
      <TrayButton $width={9} aria-label="Show desktop" />
      <DesktopEdge />
    </Tray>
  </Taskbar>
);

export default function App() {
  return (
    <Window>
      <GlobalStyle />
      <TitleBar>
        <AppIcon />
        <WindowTitle>FRT.pdf (SECURED) - Adobe Acrobat Reader DC</WindowTitle>
        <WindowButton aria-label="Minimize"><Icon w={12} h={12} sw={1}><path d="M0 5.500h12" /></Icon></WindowButton>
        <WindowButton aria-label="Restore"><Icon w={13} h={13} sw={1}><path d="M.5 3.500h9v9h-9ZM3.500 3V.5h9v9H10" /></Icon></WindowButton>
        <WindowButton aria-label="Close"><Icon w={13} h={13} sw={1.100}><path d="m.5.500 12 12M12.500.500l-12 12" /></Icon></WindowButton>
      </TitleBar>
      <MenuBar>{MENUS.map((name) => <button key={name}>{name}</button>)}</MenuBar>
      <TabBar>
        <TextTab $width={90}>Home</TextTab>
        <TextTab $width={76}>Tools</TextTab>
        <ActiveTab>
          <span>FRT.pdf (SECURED)</span>
          <CloseTab aria-label="Close tab"><Icon w={9} h={9} sw={2}><path d="m1 1 7 7M8 1 1 8" /></Icon></CloseTab>
        </ActiveTab>
        <TabBarButton aria-label="Help"><HelpIcon /></TabBarButton>
        <TabBarButton aria-label="Notifications"><Bell /></TabBarButton>
        <SignIn>Sign In</SignIn>
      </TabBar>

      <Toolbar>
        <ToolGroup>
          <ToolButton $faded aria-label="Save"><Save /></ToolButton>
          <ToolButton aria-label="Star"><Star /></ToolButton>
          <ToolButton aria-label="Upload"><Cloud /></ToolButton>
          <ToolButton aria-label="Print"><Printer /></ToolButton>
          <ToolButton aria-label="Find"><Find /></ToolButton>
        </ToolGroup>
        <ToolGroup $before="174px">
          <ToolButton aria-label="Previous page"><Circle d="M14 21V8M8.500 13 14 7.500l5.500 5.500" /></ToolButton>
          <ToolButton aria-label="Next page"><Circle d="M14 7v13M8.500 15l5.500 5.500 5.500-5.500" /></ToolButton>
          <PageField type="text" defaultValue="33865" aria-label="Page number" />
          <PageTotal>/  98223</PageTotal>
          <Separator />
          <ToolButton aria-label="Select"><Pointer /></ToolButton>
          <ToolButton $active aria-label="Hand"><Hand /></ToolButton>
          <ToolButton aria-label="Zoom out"><Circle d="M8.500 14h11" /></ToolButton>
          <ToolButton aria-label="Zoom in"><Circle d="M8 14h12M14 8v12" /></ToolButton>
          <ZoomBox>
            <ZoomSelect aria-label="Zoom level" defaultValue="75%"><option>75%</option></ZoomSelect>
            <Caret />
          </ZoomBox>
          <DropButton aria-label="Fit page"><FitPage /><Caret /></DropButton>
          <ToolButton aria-label="Page controls"><Keyboard /></ToolButton>
        </ToolGroup>
        <ToolGroup $before="11px">
          <Separator />
          <ToolButton $faded aria-label="Comment"><Comment /></ToolButton>
          <ToolButton $faded aria-label="Highlight"><Marker /></ToolButton>
          <ToolButton aria-label="Sign"><Pen /></ToolButton>
          <ToolButton aria-label="Edit"><EditDoc /></ToolButton>
        </ToolGroup>
        <ToolGroup $before="auto">
          <ToolButton aria-label="Share link"><LinkCloud /></ToolButton>
          <ToolButton aria-label="Send by email"><Envelope /></ToolButton>
          <ToolButton aria-label="Share with others"><AddUser /></ToolButton>
        </ToolGroup>
      </Toolbar>

      <Viewer>
        <SideHandle $side="left" aria-label="Open navigation pane"><Icon w={8} h={14}><path fill="#6e6e6e" stroke="none" d="M0 0v14l8-7Z" /></Icon></SideHandle>
        <Canvas><ReportPage /></Canvas>
        <ScrollBar>
          <ScrollButton aria-label="Scroll up"><Icon w={10} h={7}><path d="m.7 6 4.300-4.300L9.300 6" /></Icon></ScrollButton>
          <ScrollSpace $grow={278} />
          <ScrollThumb />
          <ScrollSpace $grow={530} />
          <ScrollButton aria-label="Scroll down"><Icon w={10} h={7}><path d="m.7 1 4.300 4.300L9.300 1" /></Icon></ScrollButton>
        </ScrollBar>
        <SideHandle $side="right" aria-label="Collapse tools pane"><Icon w={8} h={14}><path fill="#6e6e6e" stroke="none" d="M8 0v14L0 7Z" /></Icon></SideHandle>
        <ToolPanel>
          <PanelButton aria-label="Search tools"><SearchTool /></PanelButton>
          <PanelRule />
          {PANEL_TOOLS.map(([name, icon]) => <PanelButton key={name} aria-label={name}>{icon}</PanelButton>)}
          <PanelRule $bottom />
          <PanelButton aria-label="Collapse panel"><CollapsePanel /></PanelButton>
        </ToolPanel>
      </Viewer>

      <TaskbarRow />
    </Window>
  );
}
